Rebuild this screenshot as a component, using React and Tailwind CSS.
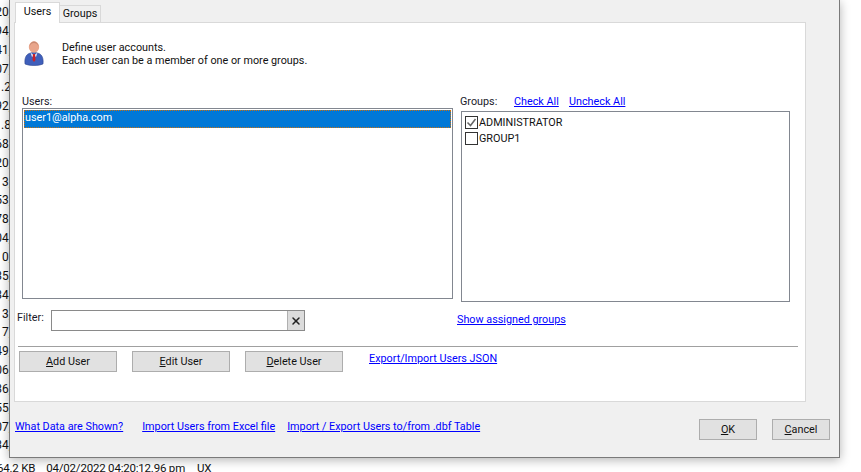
import { X } from "lucide-react";

const fragments = ["20,", "94,", "41,", "07,", "1.2", "92,", "1.8", "68,", "20,", "3,", "53,", "78,", "04,", "0,", "35,", "34,", "3,", "7,", "49,", "06,", "36,", "55,", "07,", "34,"];

function Link({ children, className = "" }) {
  return <a className={`text-[#0000ff] underline whitespace-nowrap ${className}`}>{children}</a>;
}

function Button({ children, className = "" }) {
  return (
    <button className={`flex items-center justify-center h-[21px] bg-[#e1e1e1] border border-[#adadad] text-[#111] ${className}`}>
      {children}
    </button>
  );
}

function UserIcon() {
  return (
    <svg width="20" height="26" viewBox="0 0 20 26" className="block">
      <path d="M1 24c-.6-5 .6-9 4-10.500l5-1.500 5 1.500c3.400 1.500 4.600 5.500 4 10.500-5 2-13 2-18 0z" fill="#3f5fbb" stroke="#2f478f" strokeWidth="0.6" />
      <path d="M6.500 12.500l3.500 3-2 1.500zM13.500 12.500l-3.500 3 2 1.500z" fill="#e9e6ee" />
      <path d="M9 14h2l.5 6-1.500 2-1.500-2z" fill="#c9202a" />
      <ellipse cx="10" cy="7" rx="5.200" ry="5.800" fill="#e9a58b" />
      <path d="M5.500 6.500c.5-3.500 2.500-5 4.500-5s4 1.500 4.500 5c-1-2.500-2.500-3.500-4.500-3.500s-3.500 1-4.500 3.500z" fill="#c98a72" />
    </svg>
  );
}

function GroupRow({ label, checked, className = "" }) {
  return (
    <div className="flex items-center h-[16px]">
      <span className="flex items-center justify-center w-[13px] h-[13px] border border-[#333] bg-white">
        {checked && (
          <svg width="11" height="11" viewBox="0 0 11 11">
            <path d="M1.500 5.500l3 3 5-6.500" fill="none" stroke="#666" strokeWidth="1.500" />
          </svg>
        )}
      </span>
      <span className={`ml-[1px] text-[#111] ${className}`}>{label}</span>
    </div>
  );
}

export default function App() {
  return (
    <div className="w-[861px] h-[472px] overflow-hidden bg-white text-[10.8px] leading-[13px] text-[#1a1a2a] font-['Roboto',sans-serif]">
      <div className="flex h-[458px]">
        <div className="w-[9px] shrink-0 overflow-hidden pt-[3px] text-[12px] leading-[18.85px] text-[#111]">
          {fragments.map((text, i) => (
            <div key={i} className="flex justify-end whitespace-nowrap -mr-[2px]">{text}</div>
          ))}
        </div>

        <div className="w-[831px] h-[458px] shrink-0 flex flex-col bg-[#f0f0f0] border-l border-r border-b border-[#7a7a7a] pl-[4px] shadow-[0_2px_10px_rgba(0,0,0,0.3)]">
          {/* tab strip */}
          <div className="flex h-[22px] items-end">
            <div className="relative z-10 flex items-center justify-center w-[45px] h-[21px] -mb-[1px] ml-[1px] bg-white border border-b-0 border-[#d9d9d9] text-[#111] pb-[4px]">Users</div>
            <div className="flex items-center justify-center w-[41px] h-[17px] bg-[#f0f0f0] border border-b-0 border-l-0 border-[#d9d9d9] text-[#111] pb-[2px]">Groups</div>
          </div>

          {/* tab body */}
          <div className="w-[792px] h-[380px] bg-white border border-[#d9d9d9]">
            <div className="flex h-[72px]">
              <div className="ml-[9px] mt-[17px]"><UserIcon /></div>
              <div className="ml-[18px] mt-[18px] text-[#111]">
                <p>Define user accounts.</p>
                <p>Each user can be a member of one or more groups.</p>
              </div>
            </div>

            <div className="flex items-start">
              <div className="ml-[7px] w-[431px]">
                <div className="h-[13px]">Users:</div>
                <div className="h-[191px] border border-[#828790] bg-white p-[1px]">
                  <div className="h-[18px] bg-[#0078d7] border border-dotted border-[#c9700f] text-white leading-[14px]">user1@alpha.com</div>
                </div>
              </div>
              <div className="ml-[8px]">
                <div className="flex h-[16px] -ml-[1px]">
                  <span className="w-[54px]">Groups:</span>
                  <Link className="w-[55px]">Check All</Link>
                  <Link>Uncheck All</Link>
                </div>
                <div className="w-[329px] h-[191px] border border-[#828790] bg-white pl-[3px] pt-[2px]">
                  <GroupRow label="ADMINISTRATOR" checked />
                  <GroupRow label="GROUP1" className="mt-[1px]" />
                </div>
              </div>
            </div>

            <div className="flex h-[21px] mt-[8px]">
              <span className="ml-[2px] w-[34px] mt-[1px]">Filter:</span>
              <div className="flex w-[254px] h-[21px] border border-[#8a8a8a] bg-white justify-end">
                <span className="flex items-center justify-center w-[17px] bg-[#dcdcdc] border-l border-[#b0b0b0]">
                  <X size={12} strokeWidth={3} color="#222" />
                </span>
              </div>
              <Link className="ml-[152px] mt-[3px]">Show assigned groups</Link>
            </div>

            <div className="ml-[3px] mt-[15px] w-[780px] h-px bg-[#a0a0a0]" />

            <div className="flex mt-[4px] ml-[4px]">
              <Button className="w-[98px]"><span><u>A</u>dd User</span></Button>
              <Button className="w-[98px] ml-[15px]"><span><u>E</u>dit User</span></Button>
              <Button className="w-[98px] ml-[15px]"><span><u>D</u>elete User</span></Button>
              <Link className="ml-[26px] mt-[1px]">Export/Import Users JSON</Link>
            </div>
          </div>

          {/* dialog footer */}
          <div className="flex items-start pt-[17px]">
            <Link className="ml-[1px] mt-[1px]">What Data are Shown?</Link>
            <Link className="ml-[19px] mt-[1px]">Import Users from Excel file</Link>
            <Link className="ml-[12px] mt-[1px]">Import / Export Users to/from .dbf Table</Link>
            <Button className="w-[58px] ml-auto"><span><u>O</u>K</span></Button>
            <Button className="w-[58px] ml-[15px] mr-[9px]"><span><u>C</u>ancel</span></Button>
          </div>
        </div>
      </div>

      <div className="flex whitespace-nowrap -ml-[3px] pt-[4px] text-[11.5px] tracking-[-0.2px] leading-[12px] text-[#111]">
        <span>64.2 KB</span>
        <span className="ml-[11px]">04/02/2022 04:20:12.96 pm</span>
        <span className="ml-[12px]">UX</span>
      </div>
    </div>
  );
}
